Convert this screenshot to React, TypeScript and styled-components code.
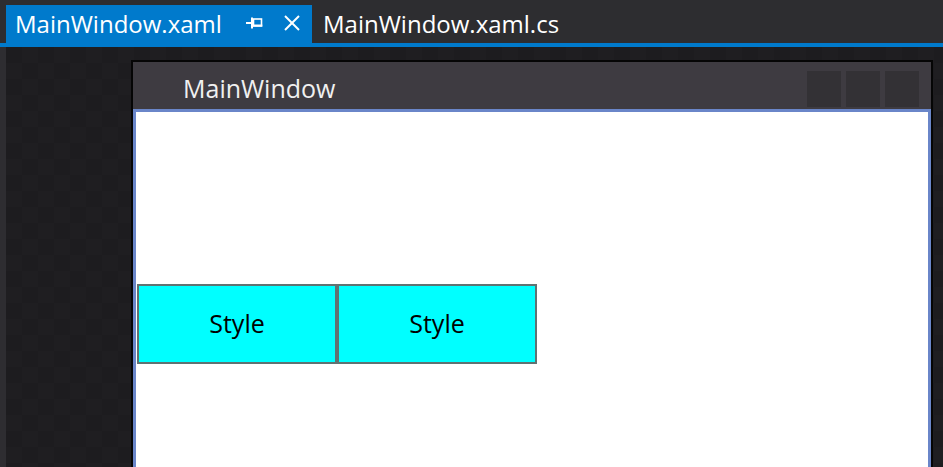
import React from "react";
import styled, { createGlobalStyle } from "styled-components";

const Global = createGlobalStyle`
  html, body { margin: 0; padding: 0; background: #2d2d30; }
  body { font-family: "Open Sans", "Noto Sans", "Liberation Sans", sans-serif; overflow: hidden; }
`;

const Shell = styled.div`
  width: 943px;
  height: 467px;
  display: flex;
  flex-direction: column;
  overflow: hidden;
  background: #2d2d30;
`;

const TabStrip = styled.div`
  height: 47px;
  box-sizing: border-box;
  padding: 5px 0 0 6px;
  display: flex;
  align-items: stretch;
  border-bottom: 4px solid #007acc;
  background: #2d2d30;
`;

const Tab = styled.div<{ $active?: boolean }>`
  display: flex;
  align-items: center;
  box-sizing: border-box;
  padding: 0 ${(p) => (p.$active ? "11px" : "12px")} 2px ${(p) => (p.$active ? "9px" : "11px")};
  background: ${(p) => (p.$active ? "#007acc" : "transparent")};
  color: #ffffff;
  font-size: 24px;
  white-space: nowrap;
  width: ${(p) => (p.$active ? "306px" : "auto")};
`;

const TabLabel = styled.span`
  flex: 1;
`;

const TabIcon = styled.span<{ $gap?: number }>`
  display: flex;
  align-items: center;
  margin-left: ${(p) => p.$gap ?? 0}px;
`;

const Body = styled.div`
  flex: 1;
  display: flex;
  min-height: 0;
`;

const SideStrip = styled.div`
  width: 6px;
  background: #2e2d31;
`;

const Canvas = styled.div`
  flex: 1;
  background-color: #1e1d20;
  background-image: repeating-conic-gradient(#1f1e21 0% 25%, #1d1c1f 0% 50%);
  background-size: 32px 32px;
  padding: 13px 0 0 125px;
  overflow: hidden;
`;

const Window = styled.div`
  width: 802px;
  height: 420px;
  box-sizing: border-box;
  border: 2px solid #050505;
  border-bottom: none;
  background: #3e3b41;
  display: flex;
  flex-direction: column;
`;

const TitleBar = styled.div`
  height: 47px;
  display: flex;
  align-items: flex-start;
  padding: 0 12px 0 50px;
`;

const Title = styled.div`
  flex: 1;
  color: #f0f0f0;
  font-size: 25px;
  line-height: 25px;
  margin-top: 14px;
`;

const Caption = styled.div`
  display: flex;
  gap: 5px;
  margin-top: 9px;
`;

const CaptionButton = styled.div`
  width: 34px;
  height: 36px;
  background: #333135;
`;

const Client = styled.div`
  flex: 1;
  border: 3px solid #6a86c9;
  border-bottom: none;
  background: #ffffff;
  padding: 172px 0 0 1px;
  display: flex;
  align-items: flex-start;
`;

const StyleButton = styled.div`
  width: 200px;
  height: 80px;
  box-sizing: border-box;
  border: 2px solid #607272;
  background: #00ffff;
  color: #000000;
  font-size: 25px;
  display: flex;
  align-items: center;
  justify-content: center;
  padding-bottom: 2px;
`;

const PinIcon = () => (
  <svg width="17" height="12" viewBox="0 0 17 12" fill="none" stroke="#ffffff">
    <line x1="0" y1="6" x2="5" y2="6" strokeWidth="2" />
    <line x1="6" y1="0.5" x2="6" y2="11.5" strokeWidth="2" />
    <rect x="7.5" y="2" width="8" height="7" strokeWidth="1.6" />
    <line x1="7" y1="8.5" x2="16.3" y2="8.5" strokeWidth="2" />
  </svg>
);

const CloseIcon = () => (
  <svg width="18" height="16" viewBox="0 0 18 16" fill="none" stroke="#ffffff" strokeWidth="2">
    <line x1="2" y1="1" x2="16" y2="15" />
    <line x1="16" y1="1" x2="2" y2="15" />
  </svg>
);

export default function App() {
  return (
    <>
      <Global />
      <Shell>
        <TabStrip>
          <Tab $active>
            <TabLabel>MainWindow.xaml</TabLabel>
            <TabIcon>
              <PinIcon />
            </TabIcon>
            <TabIcon $gap={20}>
              <CloseIcon />
            </TabIcon>
          </Tab>
          <Tab>
            <TabLabel>MainWindow.xaml.cs</TabLabel>
          </Tab>
        </TabStrip>
        <Body>
          <SideStrip />
          <Canvas>
            <Window>
              <TitleBar>
                <Title>MainWindow</Title>
                <Caption>
                  <CaptionButton />
                  <CaptionButton />
                  <CaptionButton />
                </Caption>
              </TitleBar>
              <Client>
                <StyleButton>Style</StyleButton>
                <StyleButton>Style</StyleButton>
              </Client>
            </Window>
          </Canvas>
        </Body>
      </Shell>
    </>
  );
}
